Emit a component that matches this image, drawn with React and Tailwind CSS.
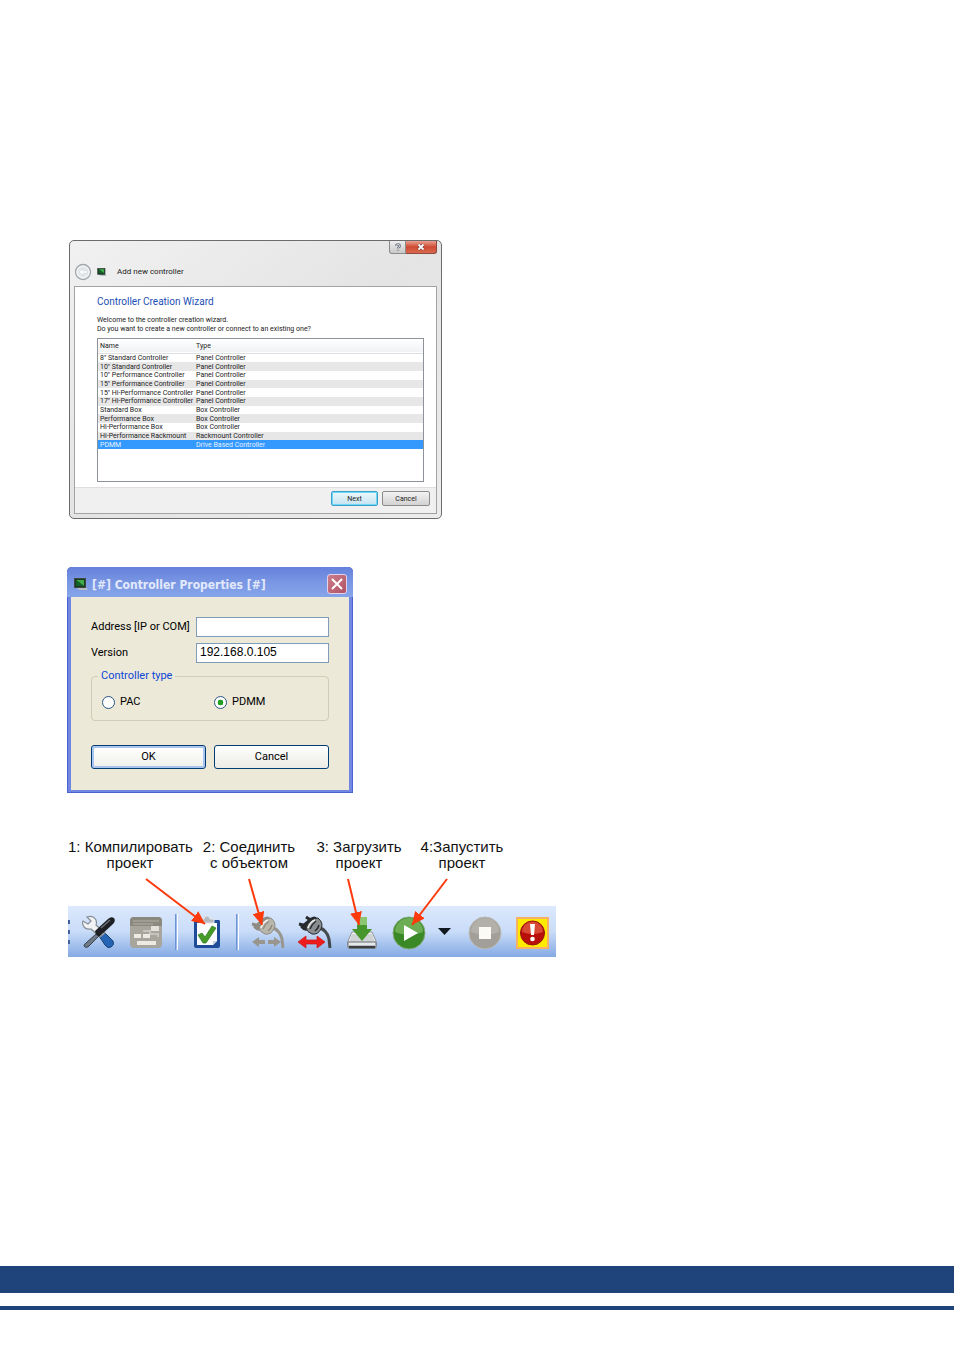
import { useState } from 'react';

const controllers = [
  { name: '8" Standard Controller', type: 'Panel Controller' },
  { name: '10" Standard Controller', type: 'Panel Controller' },
  { name: '10" Performance Controller', type: 'Panel Controller' },
  { name: '15" Performance Controller', type: 'Panel Controller' },
  { name: '15" Hi-Performance Controller', type: 'Panel Controller' },
  { name: '17" Hi-Performance Controller', type: 'Panel Controller' },
  { name: 'Standard Box', type: 'Box Controller' },
  { name: 'Performance Box', type: 'Box Controller' },
  { name: 'Hi-Performance Box', type: 'Box Controller' },
  { name: 'Hi-Performance Rackmount', type: 'Rackmount Controller' },
  { name: 'PDMM', type: 'Drive Based Controller' },
];

const ControllerIcon = ({ className }) => (
  <svg viewBox="0 0 14 12" className={className} aria-hidden="true">
    <path d="M2 9h10l2 3H5z" fill="#b4bcc4" />
    <rect x="0.500" y="0.500" width="11" height="9" fill="#1c3a22" stroke="#3d4a40" />
    <path d="M2 2h8v6z" fill="#3fae4a" />
    <path d="M2 2v6h8z" fill="#14602a" />
  </svg>
);

const WizardDialog = () => {
  const [selected, setSelected] = useState('PDMM');

  return (
    <section className="w-[373px] max-w-full rounded-[5px] border border-[#6c6c6c] bg-linear-to-br from-[#f1f1f1] via-[#e4e4e4] to-[#ececec] px-1 pb-1 font-[Roboto,sans-serif] text-[7px] text-[#222]">
      <div className="flex h-[13px] justify-end">
        <button aria-label="Help" className="flex w-[17px] items-center justify-center rounded-bl-[3px] border border-t-0 border-[#8c8c8c] bg-linear-to-b from-[#eeeeee] to-[#c9c9c9]">
          <svg viewBox="0 0 8 10" className="h-[9px] w-2" aria-hidden="true">
            <path d="M2 3.200C2 .8 6 .8 6 3.200 6 4.700 4 4.600 4 6.200M4 7.500v1.500" fill="none" stroke="#59616f" strokeWidth="2.400" />
            <path d="M2 3.200C2 .8 6 .8 6 3.200 6 4.700 4 4.600 4 6.200M4 7.500v1.500" fill="none" stroke="#fff" strokeWidth="1" />
          </svg>
        </button>
        <button aria-label="Close" className="flex w-[31px] items-center justify-center rounded-br-[3px] border border-t-0 border-l-0 border-[#8f4a40] bg-linear-to-b from-[#e8a08f] via-[#cf4a33] to-[#d9694d]">
          <svg viewBox="0 0 8 8" className="size-2" aria-hidden="true">
            <path d="M1.500 1.500l5 5m0-5l-5 5" stroke="#5f3a3a" strokeWidth="3" />
            <path d="M1.500 1.500l5 5m0-5l-5 5" stroke="#fff" strokeWidth="1.800" />
          </svg>
        </button>
      </div>
      <header className="flex h-8 items-center pt-[5px] pb-px">
        <button aria-label="Back">
          <svg viewBox="0 0 18 18" className="size-[18px]" aria-hidden="true">
            <circle cx="9" cy="9" r="7.500" fill="#e6e8ea" stroke="#a2a7ac" strokeWidth="1.300" />
            <circle cx="9" cy="9" r="6" fill="none" stroke="#f8f8f8" />
            <path d="M9 5L5 9l4 4v-2.500h4v-3H9z" fill="#f7f8f9" stroke="#cfd3d7" strokeWidth="0.600" />
          </svg>
        </button>
        <ControllerIcon className="ml-[5px] h-2 w-[10px]" />
        <h2 className="ml-[10px] text-[8px] leading-3">Add new controller</h2>
      </header>
      <div className="border border-[#a3a3a3] bg-white">
        <div className="pt-2 pr-3 pb-[5px] pl-[22px]">
          <h3 className="text-[10px] leading-[14px] text-[#1c4fb5]">Controller Creation Wizard</h3>
          <p className="mt-[7px] leading-[9px]">
            Welcome to the controller creation wizard.
            <br />
            Do you want to create a new controller or connect to an existing one?
          </p>
          <div className="mt-1 h-[144px] border border-[#8e9299]">
            <table className="h-[110px] w-full table-fixed border-collapse text-left leading-2">
              <thead>
                <tr className="h-[14px] border-b border-[#dcdfe3] bg-linear-to-b from-white to-[#f0f2f4]">
                  <th className="w-[97px] p-0 pl-[2px] font-normal">Name</th>
                  <th className="p-0 pl-px font-normal">Type</th>
                </tr>
              </thead>
              <tbody>
                {controllers.map((controller) => (
                  <tr
                    key={controller.name}
                    onClick={() => setSelected(controller.name)}
                    className={
                      controller.name === selected
                        ? 'bg-[#3399ff] text-[#e3f1ff]'
                        : 'odd:bg-white even:bg-[#e7e7e7]'
                    }
                  >
                    <td className="p-0 pl-[2px] whitespace-nowrap">{controller.name}</td>
                    <td className="p-0 pl-px whitespace-nowrap">{controller.type}</td>
                  </tr>
                ))}
              </tbody>
            </table>
          </div>
        </div>
        <div className="flex h-[26px] justify-end gap-1 border-t border-[#dfdfdf] bg-[#f0f0f0] pt-[3px] pr-[6px]">
          <button className="h-[15px] w-[47px] rounded-[2px] border border-[#3c9fc8] bg-linear-to-b from-[#eef8fc] to-[#c4e3f1] leading-3 inset-ring inset-ring-[#6fd8f7]">
            Next
          </button>
          <button className="h-[15px] w-[48px] rounded-[2px] border border-[#8b8b8b] bg-linear-to-b from-[#f3f3f3] to-[#d2d2d2] leading-3">
            Cancel
          </button>
        </div>
      </div>
    </section>
  );
};

const PropertiesDialog = () => {
  const [address, setAddress] = useState('');
  const [version, setVersion] = useState('192.168.0.105');
  const [type, setType] = useState('PDMM');

  return (
    <section className="w-[286px] max-w-full rounded-t-[5px] bg-[#7187e2] px-1 pb-[3px] font-[Roboto,sans-serif] text-[11px] text-black shadow-[inset_0_0_0_1px_#4a63d3]">
      <header className="-mx-1 flex h-[30px] items-center rounded-t-[5px] bg-linear-to-b from-[#6480dc] via-[#7a96e3] to-[#85a5ea] pt-1 pr-[6px] pl-[7px]">
        <ControllerIcon className="h-3 w-[14px]" />
        <h2 className="ml-1 pt-px font-['DejaVu_Sans_Condensed','DejaVu_Sans',sans-serif] text-[12px] leading-4 font-bold whitespace-nowrap text-[#e2e9fb]">
          [#] Controller Properties [#]
        </h2>
        <button aria-label="Close" className="ml-auto flex size-5 items-center justify-center rounded-[3px] border border-[#e0d3ec] bg-linear-to-br from-[#cc7d8c] to-[#b05263]">
          <svg viewBox="0 0 12 12" className="size-3" aria-hidden="true">
            <path d="M1 1l10 10M11 1L1 11" stroke="#fff" strokeWidth="2" />
          </svg>
        </button>
      </header>
      <form className="bg-[#ece9d8] px-5 pt-5 pb-[21px]" onSubmit={(e) => e.preventDefault()}>
        <div className="grid grid-cols-[105px_1fr] items-center gap-y-[6px]">
          <label htmlFor="address" className="whitespace-nowrap">Address [IP or COM]</label>
          <input
            id="address"
            value={address}
            onChange={(e) => setAddress(e.target.value)}
            className="h-5 w-full border border-[#7f9db9] bg-white px-[3px]"
          />
          <label htmlFor="version">Version</label>
          <input
            id="version"
            value={version}
            onChange={(e) => setVersion(e.target.value)}
            className="h-5 w-full border border-[#7f9db9] bg-white px-[3px] pb-[2px] font-['Liberation_Sans',sans-serif] text-[12px]"
          />
        </div>
        <fieldset className="mt-[6px] h-[52px] rounded-[4px] border border-[#cfcdb9] px-[10px]">
          <legend className="-ml-1 px-[3px] leading-[14px] text-[#0c46d5]">Controller type</legend>
          <div className="grid grid-cols-[112px_1fr] pt-3">
            {['PAC', 'PDMM'].map((option) => (
              <label key={option} className="flex items-center gap-[5px] leading-[14px]">
                <input
                  type="radio"
                  name="controller-type"
                  checked={type === option}
                  onChange={() => setType(option)}
                  className="size-[13px] appearance-none rounded-full border border-[#2b5684] bg-white checked:bg-radial checked:from-[#21a121] checked:from-35% checked:to-white checked:to-40%"
                />
                {option}
              </label>
            ))}
          </div>
        </fieldset>
        <div className="mt-6 grid grid-cols-2 gap-2">
          <button className="h-6 rounded-[3px] border border-[#003c74] bg-linear-to-b from-white to-[#f0f0ea] inset-ring-2 inset-ring-[#a9c4ee]">
            OK
          </button>
          <button className="h-6 rounded-[3px] border border-[#003c74] bg-linear-to-b from-white to-[#ecebe5]">
            Cancel
          </button>
        </div>
      </form>
    </section>
  );
};

const ToolsIcon = () => (
  <svg viewBox="0 0 36 36" className="size-9" aria-hidden="true">
    <path d="M18 22l5-4 9 9q2 4-2 6-3 2-6-2z" fill="#2565b3" stroke="#17427a" />
    <path d="M6 3q6-2 9 3 1 3 0 5l9 8-5 4-9-8q-6 1-8-4-1-2 0-4l5 3 3-3z" fill="#f0f2f4" stroke="#868e96" strokeWidth="1.200" />
    <path d="M15 20l3 2-11 11q-3 1-4-1 0-2 2-3z" fill="#6d7a86" stroke="#3a444e" />
    <path d="M14 17L27 5q3-3 6-1 2 3-1 6L19 22q-4 1-5-5z" fill="#1d2024" />
    <path d="M20 14l9-8" stroke="#6b7178" strokeWidth="1.500" />
  </svg>
);

const PanelIcon = () => (
  <svg viewBox="0 0 36 36" className="size-9" aria-hidden="true">
    <rect x="2" y="3" width="32" height="31" rx="4" fill="#a8a59c" />
    <path d="M6 3h24q4 0 4 4v5H2V7q0-4 4-4z" fill="#8b887f" />
    <path d="M5 7h26M5 10h20" stroke="#b3b0a7" />
    <rect x="23" y="12" width="8" height="5" fill="#e3e1d9" />
    <path d="M15 17h7v3h8v3" fill="none" stroke="#d0cdc4" strokeWidth="1.500" />
    <rect x="6" y="20" width="7" height="4" fill="#eceae3" />
    <rect x="15" y="20" width="7" height="4" fill="#eceae3" />
    <rect x="9" y="27" width="19" height="4" fill="#eceae3" />
  </svg>
);

const ClipboardIcon = () => (
  <svg viewBox="0 0 36 36" className="size-9" aria-hidden="true">
    <path d="M5 6h25q1 0 1 2v24q0 2-2 2H7q-2 0-2-2z" fill="#1f4c98" />
    <path d="M8 9h20v18l-4 4H8z" fill="#fbfcfd" />
    <path d="M24 31v-4h4z" fill="#c9d2dd" />
    <path d="M11 9V5h4q0-3 3-3t3 3h4v4z" fill="#b4bac0" stroke="#e2e5e8" />
    <path d="M9 21l4-2 3 4 7-11 4 2-10 15h-3z" fill="#469b28" stroke="#2c7a1c" strokeWidth="0.700" />
  </svg>
);

const PlugIcon = ({ body, shade, cable, children }) => (
  <svg viewBox="0 0 36 36" className="size-9" aria-hidden="true">
    <path d="M21 13q9 3 11 12l1 9" fill="none" stroke={cable} strokeWidth="3" />
    <path d="M2 10l8 2M9 3l6 4" stroke={shade} strokeWidth="3" />
    <path d="M4 14q-2-2 2-4l7-6q5-3 7 0l-8 12q-5 2-8-2z" fill={shade} />
    <path d="M9 14q4-10 12-10 6 5 3 11-3 6-9 5-5-2-6-6z" fill={body} stroke={shade} />
    <path d="M13 15q2-5 6-8M18 17q3-2 4-6" fill="none" stroke={shade} strokeWidth="1.500" />
    <path d="M11 14q2-6 7-8" fill="none" stroke="#eeeeea" strokeWidth="1.500" />
    {children}
  </svg>
);

const DownloadIcon = () => (
  <svg viewBox="0 0 36 36" className="size-9" aria-hidden="true">
    <path d="M8 18h20l4 9v7H4v-7z" fill="#f4f5f5" stroke="#8f9498" />
    <path d="M8 20h20l3 8H5z" fill="#cfd3d5" />
    <path d="M4 28h28v4q0 2-2 2H6q-2 0-2-2z" fill="#e6e8e9" stroke="#6b7074" />
    <path d="M5 33h26" stroke="#3c4044" strokeWidth="2.500" />
    <path d="M13 3h10v12h5L18 27 8 15h5z" fill="#47962c" />
    <path d="M13 3h10v8H13z" fill="#8dc671" />
  </svg>
);

const PlayIcon = () => (
  <svg viewBox="0 0 36 36" className="size-9" aria-hidden="true">
    <circle cx="18" cy="19" r="16" fill="#3b8827" stroke="#82aa79" />
    <path d="M4 18a14 14 0 0 1 28 0q-14 6-28 0z" fill="#6cad54" />
    <path d="M13 11l14 8-14 8z" fill="#fff" />
  </svg>
);

const StopIcon = () => (
  <svg viewBox="0 0 36 36" className="size-9" aria-hidden="true">
    <circle cx="18" cy="19" r="16" fill="#a19f98" stroke="#bcbab5" />
    <path d="M4 18a14 14 0 0 1 28 0q-14 6-28 0z" fill="#b2b0a9" />
    <rect x="12" y="13" width="12" height="12" fill="#fbfaf5" />
  </svg>
);

const AlertIcon = () => (
  <svg viewBox="0 0 36 36" className="size-9" aria-hidden="true">
    <rect x="3" y="4" width="31" height="30" fill="#ffea00" stroke="#f5b266" strokeWidth="2" />
    <circle cx="18.500" cy="19" r="12" fill="#b90f0a" stroke="#94130c" />
    <path d="M8 18a10.500 10.500 0 0 1 21 0q-10 4-21 0z" fill="#d84a36" />
    <path d="M16 10h5l-1 11h-3z" fill="#fff" />
    <circle cx="18.500" cy="25" r="2.300" fill="#fff" />
  </svg>
);

const Separator = () => <div className="h-9 w-[3px] border-r border-l border-r-white border-l-[#6a94d4] bg-[#9dbbe8]" />;

const steps = [
  { lines: ['1: Компилировать', 'проект'], x1: 78, y1: 42, x2: 137, y2: 87 },
  { lines: ['2: Соединить', 'с объектом'], x1: 181, y1: 42, x2: 194, y2: 88 },
  { lines: ['3: Загрузить', 'проект'], x1: 280, y1: 42, x2: 291, y2: 88 },
  { lines: ['4:Запустить', 'проект'], x1: 379, y1: 42, x2: 344, y2: 88 },
];

const ToolbarFigure = () => (
  <figure className="relative w-[488px] font-['Liberation_Sans',Arial,sans-serif]">
    <figcaption className="grid h-[69px] grid-cols-[124px_114px_106px_100px] pt-[2px] text-center text-[15px] leading-4 text-[#111]">
      {steps.map(({ lines }) => (
        <p key={lines[0]} className="whitespace-nowrap">
          {lines[0]}
          <br />
          {lines[1]}
        </p>
      ))}
    </figcaption>
    <div className="flex h-[51px] items-center gap-[11px] bg-linear-to-b from-[#dce9fd] via-[#c9dcf8] to-[#84aae3] pt-px pr-[6px]">
      <div className="flex w-[2px] flex-col gap-[6px]">
        <span className="h-1 bg-[#41639c]" />
        <span className="h-1 bg-[#41639c]" />
        <span className="h-1 bg-[#41639c]" />
      </div>
      <button aria-label="Tools"><ToolsIcon /></button>
      <button aria-label="Panel"><PanelIcon /></button>
      <Separator />
      <button aria-label="Compile"><ClipboardIcon /></button>
      <Separator />
      <button aria-label="Connect">
        <PlugIcon body="#b9b6ac" shade="#8d8b83" cable="#98968e">
          <path d="M2 28l7-5v3h6v4H9v3zM31 28l-7-5v3h-6v4h6v3z" fill="#98968f" />
        </PlugIcon>
      </button>
      <button aria-label="Connection">
        <PlugIcon body="#8b8e91" shade="#282b2e" cable="#45494c">
          <path d="M1 28l8-6v4h11v-4l8 6-8 6v-4H9v4z" fill="#ee1c1c" stroke="#c91414" strokeWidth="0.700" />
        </PlugIcon>
      </button>
      <button aria-label="Download"><DownloadIcon /></button>
      <button aria-label="Start"><PlayIcon /></button>
      <button aria-label="Start options" className="w-[18px]">
        <svg viewBox="0 0 18 10" className="h-[10px] w-[18px]" aria-hidden="true">
          <path d="M0 1h13L6.500 8z" fill="#111820" />
        </svg>
      </button>
      <button aria-label="Stop"><StopIcon /></button>
      <button aria-label="Alert"><AlertIcon /></button>
    </div>
    {/* Arrows from each caption to its button */}
    <svg viewBox="0 0 488 120" className="pointer-events-none absolute inset-0 h-[120px] w-[488px]" aria-hidden="true">
      <defs>
        <marker id="head" markerUnits="userSpaceOnUse" markerWidth="14" markerHeight="12" refX="13" refY="6" orient="auto">
          <path d="M0 0l13 6-13 6z" fill="#fc3a0c" />
        </marker>
      </defs>
      {steps.map(({ lines, x1, y1, x2, y2 }) => (
        <line key={lines[0]} x1={x1} y1={y1} x2={x2} y2={y2} stroke="#fc3a0c" strokeWidth="2" markerEnd="url(#head)" />
      ))}
    </svg>
  </figure>
);

const App = () => (
  <div className="flex min-h-screen flex-col bg-white">
    <main className="flex-1 pt-60 pb-20 pl-[67px]">
      <div className="ml-[2px]">
        <WizardDialog />
      </div>
      <div className="mt-12">
        <PropertiesDialog />
      </div>
      <div className="mt-11 ml-px">
        <ToolbarFigure />
      </div>
    </main>
    <footer className="pb-[39px]">
      <div className="h-[27px] bg-[#1f437b]" />
      <div className="mt-[13px] h-1 bg-[#1f437b]" />
    </footer>
  </div>
);

export default App;
